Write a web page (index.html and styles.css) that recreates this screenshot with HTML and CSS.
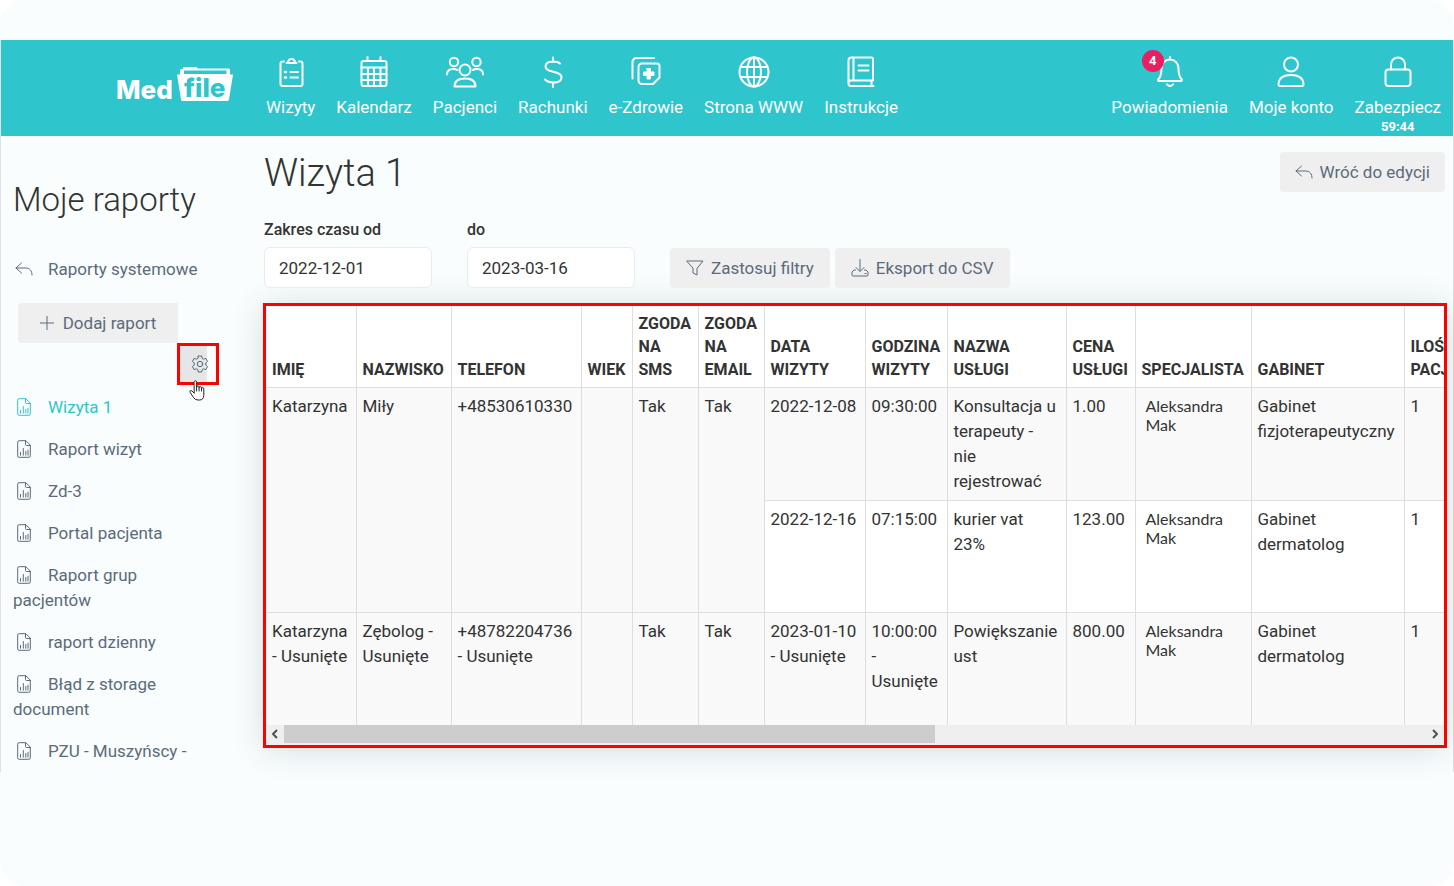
FILE: index.html
```html
<!DOCTYPE html>
<html lang="pl">
<head>
<meta charset="utf-8">
<title>Medfile – Wizyta 1</title>
<link rel="stylesheet" href="styles.css">
</head>
<body>
<svg class="sprite" aria-hidden="true">
  <symbol id="i-report" viewBox="0 0 14 18"><path d="M8.5.7H2.2A1.5 1.5 0 0 0 .7 2.2v13.6a1.5 1.5 0 0 0 1.500 1.500h9.600a1.500 1.500 0 0 0 1.500-1.500V5.500zM8.500.7v3.800a1 1 0 0 0 1 1h3.800M3.500 15.200v-2.700M6.300 15.200V8.500M8.800 15.200v-3.700M11 15.200v-5"/></symbol>
  <symbol id="i-back" viewBox="0 0 18 14"><path d="M6.500 1 1 6l5.500 5M1 6h9.500c4.500 0 6.500 3 6.500 7"/></symbol>
</svg>
<div class="frame">
<div class="app">
  <header class="topbar">
    <a class="logo" href="#" aria-label="Medfile">
      <span>Med</span>
      <span class="folder">
        <svg viewBox="0 0 56 36" width="56" height="36" aria-hidden="true"><path d="M3 9V4q0-1 1-1h2V2q0-1 1-1h12q1.500 0 1.500 1.500H51.500q1.500 0 1.500 1.500V9" fill="#fff"/><path d="M7 4.500h42.500V8H7z" fill="#2fc5cd"/><path d="M0 8.500H56L52 33.500Q51.700 35 50 35H6Q4.200 35 4 33.500z" fill="#fff"/></svg>
        <span class="folder-text">file</span>
      </span>
    </a>
    <nav class="nav">
      <a href="#"><svg width="32" height="32" viewBox="0 0 32 32"><path d="M9 5.500H7.500a2 2 0 0 0-2 2V28a2 2 0 0 0 2 2h18a2 2 0 0 0 2-2V7.500a2 2 0 0 0-2-2H24M11.500 7h10M13 6.500a3.500 3.500 0 1 1 7 0M15.500 16H23M15.500 21.500H23"/><path d="M10 16h1M10 21.500h1" stroke-width="2.500"/></svg>Wizyty</a>
      <a href="#"><svg width="32" height="32" viewBox="0 0 32 32"><rect x="3.500" y="5" width="25" height="25" rx="2"/><path d="M9.500 1v4M22.500 1v4M3.500 11.500h25M3.500 18h25M3.500 24h25M10 11.500V30M16 11.500V30M22.500 11.500V30"/></svg>Kalendarz</a>
      <a href="#"><svg width="38" height="32" viewBox="0 0 38 32"><circle cx="8" cy="6" r="4.200"/><circle cx="30.500" cy="6" r="4.200"/><circle cx="19" cy="14" r="5.500"/><path d="M1 18.500c0-4 2.500-5.500 6-5.500 1.500 0 3 0 4 1M37 18.500c0-4-2.500-5.500-6-5.500-1.500 0-3 0-4 1M8.500 30.500c0-5 3.500-8 10.500-8s10.500 3 10.500 8z"/></svg>Pacjenci</a>
      <a href="#"><svg width="32" height="32" viewBox="0 0 32 32"><path d="M16 1.500V6M16 26.500V31M23 7.500C21.500 6 19.500 5.500 16 5.500c-4.500 0-7.500 1.500-7.500 5 0 7 16 3.500 16 11 0 3.500-3.500 5-8 5-4 0-6.500-1-8.500-3"/></svg>Rachunki</a>
      <a href="#"><svg width="32" height="32" viewBox="0 0 32 32"><path d="M2.500 22.500V6a4 4 0 0 1 4-4H24M12 7.500h15a2.500 2.500 0 0 1 2.500 2.500v11.500L23 28H12a3.500 3.500 0 0 1-3.500-3.500V11A3.500 3.500 0 0 1 12 7.500z"/><path class="cross" d="M17 12.500h3.500V16H24v3.500h-3.500V23H17v-3.500h-3.500V16H17z"/></svg>e-Zdrowie</a>
      <a href="#"><svg width="32" height="32" viewBox="0 0 32 32"><circle cx="16" cy="16" r="14.500"/><ellipse cx="16" cy="16" rx="7" ry="14.500"/><path d="M16 1.500v29M3 11h26M3 21h26"/></svg>Strona WWW</a>
      <a href="#"><svg width="32" height="32" viewBox="0 0 32 32"><path d="M28 24.500H6a2.500 2.500 0 0 0-2.500 2.700C3.500 29 4.500 30 6 30h22.500M26.500 24.500V30M3.500 27V4.500a3 3 0 0 1 3-3h20A1.500 1.500 0 0 1 28 3v21.500M8.500 1.500v23M13.500 9.500h10M13.500 14.500h10"/></svg>Instrukcje</a>
    </nav>
    <nav class="nav nav-user">
      <a href="#"><span class="bell"><svg width="32" height="32" viewBox="0 0 32 32"><path d="M16 1v2.500M16 3.500c-5 0-8.500 4-8.500 9 0 6-.5 8-3 10.500-.8 1-.5 2 .8 2h21.400c1.300 0 1.600-1 .8-2-2.500-2.500-3-4.500-3-10.500 0-5-3.500-9-8.500-9zM13 28.300q3 3.500 6 0"/></svg><span class="count">4</span></span>Powiadomienia</a>
      <a href="#"><svg width="32" height="32" viewBox="0 0 32 32"><circle cx="16" cy="8.500" r="7"/><path d="M3.500 28c.5-6 5-9 12.500-9s12 3 12.500 9c0 1.500-.5 2-1.500 2H5c-1 0-1.500-.5-1.500-2z"/></svg>Moje konto</a>
      <a href="#"><svg width="32" height="32" viewBox="0 0 32 32"><rect x="3.500" y="13.500" width="25" height="16.500" rx="3"/><path d="M9 13.500V8.500a7 7 0 0 1 14 0v5"/></svg>Zabezpiecz<b class="timer">59:44</b></a>
    </nav>
  </header>

  <div class="body">
    <aside class="sidebar">
      <h2>Moje raporty</h2>
      <a class="item back" href="#"><svg width="18" height="14"><use href="#i-back"/></svg>Raporty systemowe</a>
      <button class="btn add" type="button"><svg width="14" height="14" viewBox="0 0 14 14"><path d="M7 0v14M0 7h14"/></svg>Dodaj raport</button>
      <div class="settings">
        <button class="gear" type="button" aria-label="Ustawienia"><svg width="18" height="18" viewBox="0 0 18 18"><circle cx="9" cy="9" r="2.700"/><path d="M7.300 1h3.400l.5 2.400 1.400.8 2.300-.8 1.700 3-1.800 1.600v2l1.800 1.600-1.700 3-2.300-.8-1.400.8-.5 2.400H7.300l-.5-2.400-1.400-.8-2.300.8-1.700-3L3.200 10V8L1.400 6.400l1.700-3 2.300.8 1.400-.8z"/></svg></button>
        <svg class="pointer" width="16" height="21" viewBox="0 0 16 21" aria-hidden="true"><path d="M5 13 3 11C1.800 9.800.2 11 1.200 12.500L4.500 17.500Q6 20 9 20h1.500q4 0 4.300-4.500V8.800c0-1.500-2.200-1.500-2.300 0V7.800c0-1.500-2.300-1.500-2.400 0V7c0-1.500-2.400-1.500-2.500 0V2.200c0-2-2.600-2-2.600 0zM7.600 7v4M10.100 7.800V11M12.500 8.800V11"/></svg>
      </div>
      <nav class="list">
        <a class="item active" href="#"><svg width="14" height="18"><use href="#i-report"/></svg>Wizyta 1</a>
        <a class="item" href="#"><svg width="14" height="18"><use href="#i-report"/></svg>Raport wizyt</a>
        <a class="item" href="#"><svg width="14" height="18"><use href="#i-report"/></svg>Zd-3</a>
        <a class="item" href="#"><svg width="14" height="18"><use href="#i-report"/></svg>Portal pacjenta</a>
        <a class="item" href="#"><svg width="14" height="18"><use href="#i-report"/></svg>Raport grup pacjentów</a>
        <a class="item" href="#"><svg width="14" height="18"><use href="#i-report"/></svg>raport dzienny</a>
        <a class="item" href="#"><svg width="14" height="18"><use href="#i-report"/></svg>Błąd z storage document</a>
        <a class="item cut" href="#"><svg width="14" height="18"><use href="#i-report"/></svg>PZU - Muszyńscy -</a>
      </nav>
    </aside>

    <main class="main">
      <div class="head">
        <h1>Wizyta 1</h1>
        <button class="btn" type="button"><svg width="18" height="14"><use href="#i-back"/></svg>Wróć do edycji</button>
      </div>
      <form class="filters">
        <div class="field"><label for="from">Zakres czasu od</label><input id="from" type="text" value="2022-12-01"></div>
        <div class="field"><label for="to">do</label><input id="to" type="text" value="2023-03-16"></div>
        <div class="actions">
          <button class="btn" type="button"><svg width="18" height="16" viewBox="0 0 18 16"><path d="M1 1h16l-6 7.500V15l-4-2V8.500z"/></svg>Zastosuj filtry</button>
          <button class="btn" type="button"><svg width="18" height="18" viewBox="0 0 18 18"><path d="M9 .5V12M5 8.500 9 12.500l4-4M4.500 11H3l-2 2v3a1 1 0 0 0 1 1h14a1 1 0 0 0 1-1v-3l-2-2h-1.500M14 14.500h1"/></svg>Eksport do CSV</button>
        </div>
      </form>
      <section class="report">
        <div class="scroller">
          <table>
            <colgroup><col class="w90"><col class="w95"><col class="w130"><col class="w51"><col class="w66"><col class="w66"><col class="w101"><col class="w82"><col class="w119"><col class="w69"><col class="w116"><col class="w153"><col></colgroup>
            <thead>
              <tr><th>IMIĘ</th><th>NAZWISKO</th><th>TELEFON</th><th>WIEK</th><th>ZGODA NA SMS</th><th>ZGODA NA EMAIL</th><th>DATA WIZYTY</th><th>GODZINA WIZYTY</th><th>NAZWA USŁUGI</th><th>CENA USŁUGI</th><th>SPECJALISTA</th><th>GABINET</th><th>ILOŚĆ<br>PACJENTÓW</th></tr>
            </thead>
            <tbody>
              <tr class="odd"><td rowspan="2">Katarzyna</td><td rowspan="2">Miły</td><td rowspan="2">+48530610330</td><td rowspan="2"></td><td rowspan="2">Tak</td><td rowspan="2">Tak</td><td>2022-12-08</td><td>09:30:00</td><td>Konsultacja u terapeuty - nie rejestrować</td><td>1.00</td><td class="doctor">Aleksandra Mak</td><td>Gabinet fizjoterapeutyczny</td><td>1</td></tr>
              <tr><td>2022-12-16</td><td>07:15:00</td><td>kurier vat<br>23%</td><td>123.00</td><td class="doctor">Aleksandra Mak</td><td>Gabinet dermatolog</td><td>1</td></tr>
              <tr class="odd"><td>Katarzyna - Usunięte</td><td>Zębolog - Usunięte</td><td>+48782204736 - Usunięte</td><td></td><td>Tak</td><td>Tak</td><td>2023-01-10 - Usunięte</td><td>10:00:00 - Usunięte</td><td>Powiększanie ust</td><td>800.00</td><td class="doctor">Aleksandra Mak</td><td>Gabinet dermatolog</td><td>1</td></tr>
            </tbody>
          </table>
        </div>
        <div class="scrollbar" aria-hidden="true">
          <svg width="18" height="18" viewBox="0 0 18 18"><path d="M11 5 7 9l4 4"/></svg>
          <div class="track"><div class="thumb"></div></div>
          <svg width="18" height="18" viewBox="0 0 18 18"><path d="m7 5 4 4-4 4"/></svg>
        </div>
      </section>
    </main>
  </div>
</div>
</div>
</body>
</html>
```
FILE: styles.css
```css
* { box-sizing: border-box; }
body {
  margin: 0;
  background: #fff;
  color: #333;
  font: 17px/25px Roboto, "Liberation Sans", sans-serif;
}
a { color: inherit; text-decoration: none; }
svg { flex: none; fill: none; stroke: currentColor; stroke-width: 1; stroke-linecap: round; stroke-linejoin: round; }
.sprite { display: none; }
.frame {
  min-height: 100vh;
  padding-top: 40px;
  background: #f9fdfd;
  border-radius: 24px;
}
.app { border: solid #dfe1e3; border-width: 0 1px; }

.topbar {
  display: flex;
  height: 96px;
  padding-right: 12px;
  background: #2fc5cd;
  color: #fff;
}
.logo {
  display: flex;
  align-items: flex-start;
  width: 265px;
  padding: 26px 0 0 115px;
  gap: 4px;
  font: 800 26px/48px Inter, sans-serif;
}
.folder { position: relative; }
.folder svg { display: block; stroke: none; }
.folder-text {
  position: absolute;
  inset: 8px 0 auto;
  color: #2fc5cd;
  font-size: 26px;
  line-height: 28px;
  text-align: center;
}
.nav { display: flex; gap: 21px; padding-top: 16px; }
.nav a { display: flex; flex-direction: column; align-items: center; line-height: 20px; white-space: nowrap; }
.nav svg { display: block; margin-bottom: 9px; stroke-width: 2; }
.nav .cross { fill: #fff; stroke-width: 1; }
.nav-user { margin-left: auto; }
.bell { position: relative; }
.count {
  position: absolute;
  left: -12px;
  top: -6px;
  width: 22px;
  border-radius: 50%;
  background: #e91e63;
  font-size: 13px;
  font-weight: 700;
  line-height: 22px;
  text-align: center;
}
.timer { font-size: 13px; line-height: 19px; }

.body { display: flex; }
.sidebar {
  width: 251px;
  flex: none;
  padding: 44px 46px 11px 12px;
  color: #5b6b7b;
}
.sidebar h2 { margin: 0 0 37px; color: #333; font-size: 33px; font-weight: 300; line-height: 40px; white-space: nowrap; }
.item { display: block; margin-bottom: 17px; }
.item svg { width: 22px; margin-right: 13px; vertical-align: -3px; }
.item.back { margin-bottom: 21px; white-space: nowrap; }
.item.back svg { vertical-align: -1px; }
.active { color: #2fc5cd; }
.item.cut { height: 22px; margin: 0; overflow: hidden; white-space: nowrap; }
.btn {
  display: flex;
  align-items: center;
  gap: 7px;
  height: 40px;
  padding: 0 15px;
  border: 0;
  border-radius: 4px;
  background: #efefef;
  color: #5b6b7b;
  font: inherit;
  white-space: nowrap;
}
.add { width: 160px; margin-left: 5px; padding: 0; gap: 9px; justify-content: center; border-radius: 4px 0 0 4px; }
.settings { position: relative; margin: 0 0 10px 164px; }
.gear {
  display: flex;
  align-items: center;
  justify-content: flex-end;
  width: 42px;
  height: 42px;
  padding: 0 7px 0 0;
  border: 3px solid #f00;
  background: linear-gradient(to right, #e6e6e6 27px, #f9fdfd 27px);
  color: #5b6b7b;
}
.pointer { position: absolute; left: 12px; top: 37px; fill: #fff; stroke: #222; }

.main { flex: 1; min-width: 0; padding: 16px 6px 0 11px; }
.head { display: flex; justify-content: space-between; padding: 0 2px 0 1px; }
.head h1 { margin: 0; font-size: 38px; font-weight: 300; line-height: 43px; }
.filters { display: flex; gap: 35px; padding: 22px 1px 15px; }
.field { width: 168px; }
.field label { display: block; margin-bottom: 5px; font-weight: 500; font-size: 16px; }
.field input {
  width: 100%;
  height: 41px;
  padding: 0 14px;
  border: 1px solid #e9eced;
  border-radius: 6px;
  background: #fff;
  color: #333;
  font: inherit;
}
.actions { display: flex; gap: 5px; align-items: flex-end; }
.actions .btn { padding: 0 16px; }

.report { border: 3px solid #f00; background: #efefef; box-shadow: 0 2px 30px rgba(40, 60, 60, .16); }
.scroller { overflow: hidden; }
table { width: 2057px; table-layout: fixed; border-collapse: collapse; background: #fff; }
.w51 { width: 51px; } .w66 { width: 66px; } .w69 { width: 69px; } .w82 { width: 82px; }
.w90 { width: 90px; } .w95 { width: 95px; } .w101 { width: 101px; } .w116 { width: 116px; }
.w119 { width: 119px; } .w130 { width: 130px; } .w153 { width: 153px; }
th, td { padding: 6px; border-right: 1px solid #dedede; text-align: left; }
th { font-size: 16px; font-weight: 700; line-height: 23px; vertical-align: bottom; }
tbody td { height: 112px; border-top: 1px solid #dedede; vertical-align: top; }
.odd td { background: #f9f9f9; }
td.doctor { padding: 8px 10px; font: 16px/19px Lato, sans-serif; }
.scrollbar { display: flex; height: 20px; padding-bottom: 2px; color: #505050; }
.scrollbar svg { stroke-width: 2; stroke-linecap: butt; }
.track { flex: 1; }
.thumb { width: 57%; height: 18px; background: #cdcdcd; }
```
